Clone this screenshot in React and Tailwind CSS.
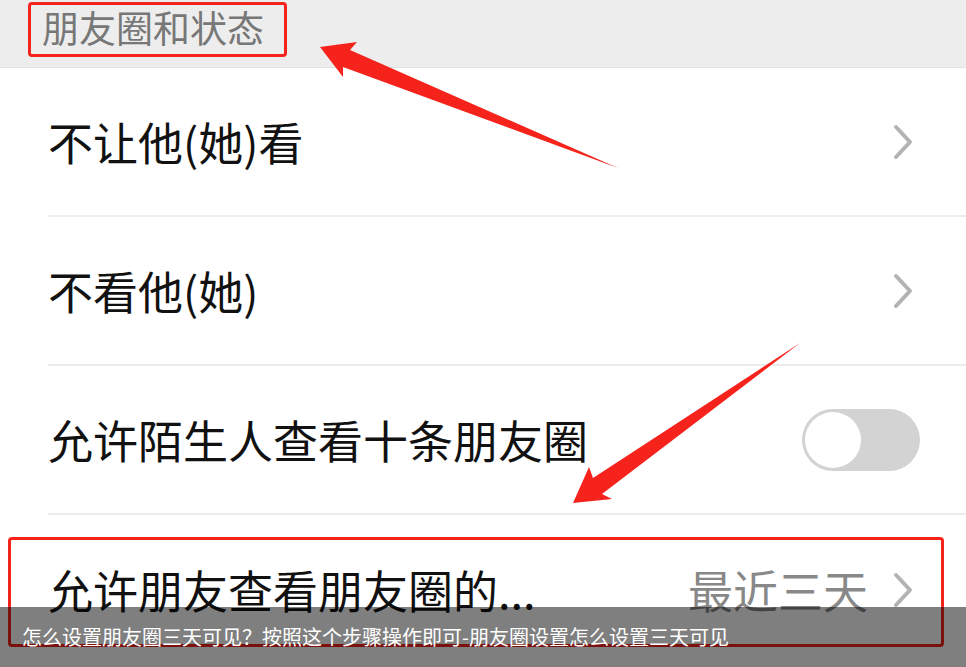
const cjk = { fontFamily: '"Noto Sans CJK SC", "Noto Sans", sans-serif' };

function Chevron() {
  return (
    <svg width="22" height="36" viewBox="0 0 22 36" className="shrink-0">
      <path d="M4 3 L18 18 L4 33" fill="none" stroke="#b3b3b3" strokeWidth="4" strokeLinecap="round" strokeLinejoin="round" />
    </svg>
  );
}

function Toggle() {
  return (
    <div className="flex h-[62px] w-[118px] items-center rounded-full bg-[#d3d3d3] p-[3px]">
      <div className="h-[56px] w-[56px] rounded-full bg-white" />
    </div>
  );
}

function Row({ label, right, last }) {
  return (
    <div className="flex h-[149px] items-center pl-12">
      <div className={`flex h-full flex-1 items-center justify-between pr-[52px] ${last ? "" : "border-b-2 border-[#ececec]"}`}>
        <span className="text-[45px] leading-none text-[#111]">{label}</span>
        {right}
      </div>
    </div>
  );
}

export default function App() {
  return (
    <div className="relative h-[667px] w-[966px] overflow-hidden bg-white" style={cjk}>
      <div className="flex h-[68px] items-start border-b border-[#e2e2e2] bg-[#ededed] pl-[42px] pt-[3px]">
        <span className="text-[37px] leading-[48px] text-[#777]">朋友圈和状态</span>
      </div>

      <Row label="不让他(她)看" right={<Chevron />} />
      <Row label="不看他(她)" right={<Chevron />} />
      <Row label="允许陌生人查看十条朋友圈" right={<div className="-mr-[6px]"><Toggle /></div>} />
      <Row
        label="允许朋友查看朋友圈的..."
        last
        right={
          <div className="flex items-center gap-6">
            <span className="text-[45px] leading-none text-[#888]">最近三天</span>
            <Chevron />
          </div>
        }
      />

      {/* red highlight boxes */}
      <div className="absolute left-[28px] top-[2px] h-[55px] w-[259px] rounded-[4px] border-[3px] border-[#f5231b]" />
      <div className="absolute left-[8px] top-[537px] h-[110px] w-[936px] rounded-[4px] border-[3px] border-[#f5231b]" />

      {/* arrows */}
      <svg className="absolute inset-0" width="966" height="667" viewBox="0 0 966 667">
        <polygon points="320,47 357,42 350,50 618,168 343,67 343,77" fill="#f5231b" />
        <polygon points="573,503 589,467 593,478 800,343 602,494 612,499" fill="#f5231b" />
      </svg>

      {/* caption */}
      <div className="absolute bottom-0 left-0 flex h-[60px] w-full items-center bg-black/50 pl-[22px]">
        <span className="text-[20px] leading-none text-white">怎么设置朋友圈三天可见？按照这个步骤操作即可-朋友圈设置怎么设置三天可见</span>
      </div>
    </div>
  );
}
